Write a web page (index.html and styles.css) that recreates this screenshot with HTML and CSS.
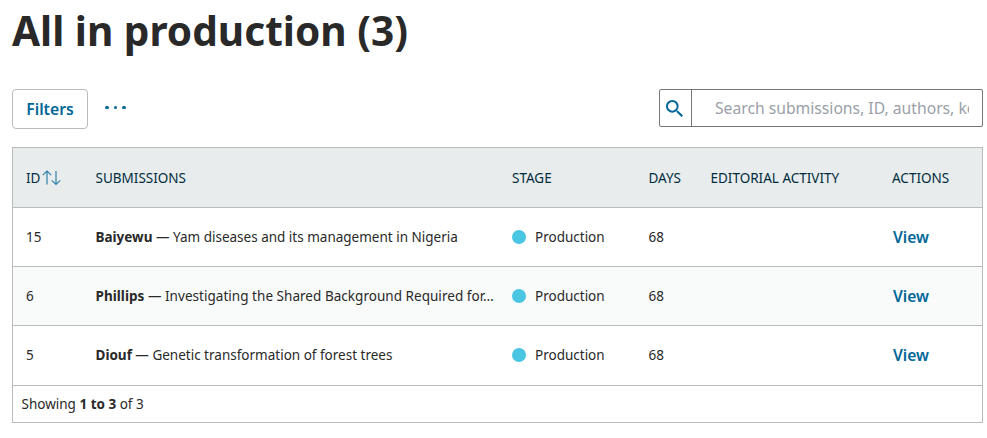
FILE: index.html
```
<!DOCTYPE html>
<html lang="en">
<head>
<meta charset="utf-8">
<title>All in production</title>
<link rel="stylesheet" href="styles.css">
</head>
<body>
<h1 class="title">All in production (3)</h1>
<div class="toolbar">
  <div class="actions">
    <button class="filters">Filters</button>
    <button class="more" aria-label="More"><i></i><i></i><i></i></button>
  </div>
  <div class="search">
    <span class="search-icon"><svg width="17" height="17" viewBox="3 3 17.500 17.500"><path fill="#006798" d="M15.500 14h-.79l-.28-.27A6.470 6.470 0 0 0 16 9.500 6.500 6.500 0 1 0 9.500 16c1.610 0 3.090-.59 4.230-1.570l.27.28v.79l5 4.990L20.490 19l-4.990-5zm-6 0C7.010 14 5 11.990 5 9.500S7.010 5 9.500 5 14 7.010 14 9.500 11.990 14 9.500 14z"/></svg></span>
    <div class="search-field"><span>Search submissions, ID, authors, keywords</span></div>
  </div>
</div>
<div class="table">
  <div class="row head">
    <div class="id">ID<svg class="sort" width="19" height="16" viewBox="0 0 19 16"><path d="M5 14.500V1M.8 5.200 5 1l4.200 4.200M14 1v13.500M9.800 10.300l4.200 4.200 4.200-4.200"/></svg></div>
    <div>SUBMISSIONS</div><div>STAGE</div><div>DAYS</div><div>EDITORIAL ACTIVITY</div><div>ACTIONS</div>
  </div>
  <div class="row">
    <div>15</div><div class="sub"><b>Baiyewu</b> — Yam diseases and its management in Nigeria</div><div class="stage"><i class="dot"></i>Production</div><div>68</div><div></div><div class="view">View</div>
  </div>
  <div class="row alt">
    <div>6</div><div class="sub"><b>Phillips</b> — Investigating the Shared Background Required for…</div><div class="stage"><i class="dot"></i>Production</div><div>68</div><div></div><div class="view">View</div>
  </div>
  <div class="row last">
    <div>5</div><div class="sub"><b>Diouf</b> — Genetic transformation of forest trees</div><div class="stage"><i class="dot"></i>Production</div><div>68</div><div></div><div class="view">View</div>
  </div>
  <div class="foot">Showing <b>1 to 3</b> of 3</div>
</div>
</body>
</html>
```
FILE: styles.css
```
* { box-sizing: border-box; }
body { margin: 0; padding: 0 4px 0 12px; height: 438px; overflow: hidden; background: #fff; color: #292929; font: 13.5px/20px "Noto Sans", sans-serif; }
.title { margin: 0; padding-top: 4px; height: 89px; font-size: 40.6px; line-height: 54px; font-weight: 700; white-space: nowrap; }
.toolbar { display: flex; justify-content: space-between; height: 58px; align-items: flex-start; }
.actions { display: flex; }
button { font: inherit; background: none; border: 0; padding: 0; }
.filters { width: 76px; height: 40px; border: 1px solid #bbb; border-radius: 4px; color: #006798; font-size: 15.7px; font-weight: 600; }
.more { display: flex; gap: 5px; align-items: center; height: 37px; margin-left: 17px; }
.more i { width: 3.5px; height: 3.5px; border-radius: 50%; background: #006798; }
.search { display: flex; width: 324px; height: 38px; border: 1px solid #777; border-radius: 2px; }
.search-icon { flex: none; width: 32px; display: flex; align-items: center; justify-content: center; padding-right: 2px; border-right: 1px solid #777; }
.search-field { flex: 1; min-width: 0; padding: 0 13px 0 23px; color: #9a9fa8; font-size: 15.7px; line-height: 36px; }
.search-field span { display: block; overflow: hidden; white-space: nowrap; }
.table { width: 971px; border: 1px solid #bbb; }
.row { display: grid; grid-template-columns: 69.5px 416.5px 136.5px 62px 181.5px 1fr; align-items: center; height: 59px; padding-left: 13px; border-bottom: 1px solid #bbb; white-space: nowrap; }
.head { height: 60px; background: #e8ecec; color: #002c40; }
.alt { background: #f9fafa; }
.alt .sub { letter-spacing: 0.035px; }
.last { height: 60px; padding-bottom: 1px; }
.id { display: flex; align-items: center; }
.sort { flex: none; margin-left: 1.5px; fill: none; stroke: #2f82a9; stroke-width: 1.2; }
.stage { display: flex; align-items: center; }
.dot { width: 14px; height: 14px; border-radius: 50%; background: #4ac6e3; margin-right: 9px; }
.view { padding-left: 1px; color: #006798; font-size: 15.6px; font-weight: 600; }
.foot { height: 36px; padding: 8px 8.5px; }
```
